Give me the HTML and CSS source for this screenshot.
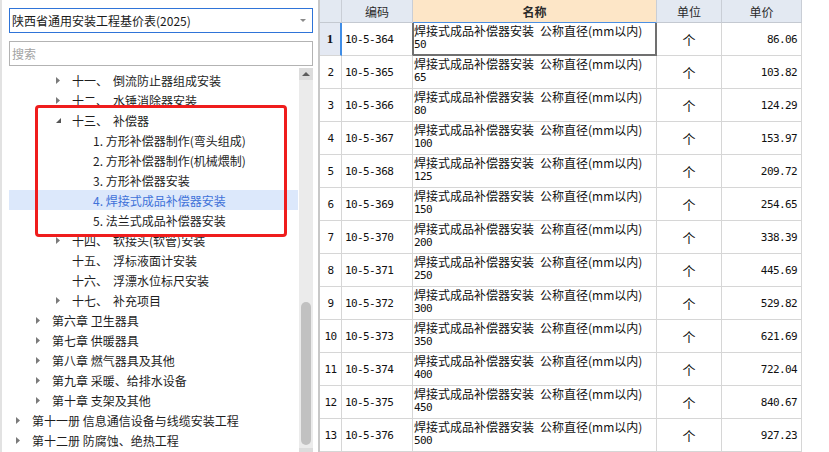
FILE: index.html
```html
<!DOCTYPE html>
<html lang="zh-CN">
<head>
<meta charset="utf-8">
<title>基价表</title>
<link rel="stylesheet" href="styles.css">
</head>
<body>
<div class="app">
  <aside class="side">
    <div class="combo">
      <span class="combo-text">陕西省通用安装工程基价表(2025)</span>
      <svg class="caret" width="6" height="3" viewBox="0 0 6 3"><polygon points="0,0 6,0 3,3" fill="#8a8a8a"/></svg>
    </div>
    <div class="search">搜索</div>
    <div class="tree-wrap">
      <ul class="tree">
        <li class="node l2"><span class="tw"><svg width="4" height="7" viewBox="0 0 4 7"><polygon points="0,0 4,3.5 0,7" fill="#7a7a7a"/></svg></span><span class="ord">十一、</span>倒流防止器组成安装</li>
        <li class="node l2"><span class="tw"><svg width="4" height="7" viewBox="0 0 4 7"><polygon points="0,0 4,3.5 0,7" fill="#7a7a7a"/></svg></span><span class="ord">十二、</span>水锤消除器安装</li>
        <li class="node l2"><span class="tw"><svg width="5" height="5" viewBox="0 0 5 5"><polygon points="5,0 5,5 0,5" fill="#555"/></svg></span><span class="ord">十三、</span>补偿器</li>
        <li class="node l3">1. 方形补偿器制作(弯头组成)</li>
        <li class="node l3">2. 方形补偿器制作(机械煨制)</li>
        <li class="node l3">3. 方形补偿器安装</li>
        <li class="node l3 sel">4. 焊接式成品补偿器安装</li>
        <li class="node l3">5. 法兰式成品补偿器安装</li>
        <li class="node l2"><span class="tw"><svg width="4" height="7" viewBox="0 0 4 7"><polygon points="0,0 4,3.5 0,7" fill="#7a7a7a"/></svg></span><span class="ord">十四、</span>软接头(软管)安装</li>
        <li class="node l2"><span class="tw"></span><span class="ord">十五、</span>浮标液面计安装</li>
        <li class="node l2"><span class="tw"></span><span class="ord">十六、</span>浮漂水位标尺安装</li>
        <li class="node l2"><span class="tw"><svg width="4" height="7" viewBox="0 0 4 7"><polygon points="0,0 4,3.5 0,7" fill="#7a7a7a"/></svg></span><span class="ord">十七、</span>补充项目</li>
        <li class="node l1"><span class="tw"><svg width="4" height="7" viewBox="0 0 4 7"><polygon points="0,0 4,3.5 0,7" fill="#7a7a7a"/></svg></span>第六章 卫生器具</li>
        <li class="node l1"><span class="tw"><svg width="4" height="7" viewBox="0 0 4 7"><polygon points="0,0 4,3.5 0,7" fill="#7a7a7a"/></svg></span>第七章 供暖器具</li>
        <li class="node l1"><span class="tw"><svg width="4" height="7" viewBox="0 0 4 7"><polygon points="0,0 4,3.5 0,7" fill="#7a7a7a"/></svg></span>第八章 燃气器具及其他</li>
        <li class="node l1"><span class="tw"><svg width="4" height="7" viewBox="0 0 4 7"><polygon points="0,0 4,3.5 0,7" fill="#7a7a7a"/></svg></span>第九章 采暖、给排水设备</li>
        <li class="node l1"><span class="tw"><svg width="4" height="7" viewBox="0 0 4 7"><polygon points="0,0 4,3.5 0,7" fill="#7a7a7a"/></svg></span>第十章 支架及其他</li>
        <li class="node l0"><span class="tw"><svg width="4" height="7" viewBox="0 0 4 7"><polygon points="0,0 4,3.5 0,7" fill="#7a7a7a"/></svg></span>第十一册 信息通信设备与线缆安装工程</li>
        <li class="node l0"><span class="tw"><svg width="4" height="7" viewBox="0 0 4 7"><polygon points="0,0 4,3.5 0,7" fill="#7a7a7a"/></svg></span>第十二册 防腐蚀、绝热工程</li>
      </ul>
      <div class="vscroll">
        <div class="sb-btn"><svg width="8" height="4" viewBox="0 0 8 4"><polygon points="0,4 8,4 4,0" fill="#5c5c5c"/></svg></div>
        <div class="sb-track"><div class="sb-thumb"></div></div>
        <div class="sb-btn"><svg width="8" height="4" viewBox="0 0 8 4"><polygon points="0,0 8,0 4,4" fill="#5c5c5c"/></svg></div>
      </div>
    </div>
    <div class="annot"></div>
  </aside>

  <main class="pane">
    <div class="grid">
      <div class="hd rn"></div>
      <div class="hd">编码</div>
      <div class="hd hd-name">名称</div>
      <div class="hd">单位</div>
      <div class="hd">单价</div>

      <div class="c rn cur">1</div><div class="c code cur-code">10-5-364</div><div class="c name focus"><span>焊接式成品补偿器安装&ensp;公称直径(mm以内)</span><span class="dn">50</span></div><div class="c unit">个</div><div class="c price">86.06</div>
      <div class="c rn">2</div><div class="c code">10-5-365</div><div class="c name"><span>焊接式成品补偿器安装&ensp;公称直径(mm以内)</span><span class="dn">65</span></div><div class="c unit">个</div><div class="c price">103.82</div>
      <div class="c rn">3</div><div class="c code">10-5-366</div><div class="c name"><span>焊接式成品补偿器安装&ensp;公称直径(mm以内)</span><span class="dn">80</span></div><div class="c unit">个</div><div class="c price">124.29</div>
      <div class="c rn">4</div><div class="c code">10-5-367</div><div class="c name"><span>焊接式成品补偿器安装&ensp;公称直径(mm以内)</span><span class="dn">100</span></div><div class="c unit">个</div><div class="c price">153.97</div>
      <div class="c rn">5</div><div class="c code">10-5-368</div><div class="c name"><span>焊接式成品补偿器安装&ensp;公称直径(mm以内)</span><span class="dn">125</span></div><div class="c unit">个</div><div class="c price">209.72</div>
      <div class="c rn">6</div><div class="c code">10-5-369</div><div class="c name"><span>焊接式成品补偿器安装&ensp;公称直径(mm以内)</span><span class="dn">150</span></div><div class="c unit">个</div><div class="c price">254.65</div>
      <div class="c rn">7</div><div class="c code">10-5-370</div><div class="c name"><span>焊接式成品补偿器安装&ensp;公称直径(mm以内)</span><span class="dn">200</span></div><div class="c unit">个</div><div class="c price">338.39</div>
      <div class="c rn">8</div><div class="c code">10-5-371</div><div class="c name"><span>焊接式成品补偿器安装&ensp;公称直径(mm以内)</span><span class="dn">250</span></div><div class="c unit">个</div><div class="c price">445.69</div>
      <div class="c rn">9</div><div class="c code">10-5-372</div><div class="c name"><span>焊接式成品补偿器安装&ensp;公称直径(mm以内)</span><span class="dn">300</span></div><div class="c unit">个</div><div class="c price">529.82</div>
      <div class="c rn">10</div><div class="c code">10-5-373</div><div class="c name"><span>焊接式成品补偿器安装&ensp;公称直径(mm以内)</span><span class="dn">350</span></div><div class="c unit">个</div><div class="c price">621.69</div>
      <div class="c rn">11</div><div class="c code">10-5-374</div><div class="c name"><span>焊接式成品补偿器安装&ensp;公称直径(mm以内)</span><span class="dn">400</span></div><div class="c unit">个</div><div class="c price">722.04</div>
      <div class="c rn">12</div><div class="c code">10-5-375</div><div class="c name"><span>焊接式成品补偿器安装&ensp;公称直径(mm以内)</span><span class="dn">450</span></div><div class="c unit">个</div><div class="c price">840.67</div>
      <div class="c rn">13</div><div class="c code">10-5-376</div><div class="c name"><span>焊接式成品补偿器安装&ensp;公称直径(mm以内)</span><span class="dn">500</span></div><div class="c unit">个</div><div class="c price">927.23</div>
    </div>
  </main>
</div>
</body>
</html>
```
FILE: styles.css
```css
html, body {
  margin: 0;
  padding: 0;
  background: #fff;
  overflow: hidden;
}

body {
  font-family: "Noto Sans CJK SC", "Noto Sans", sans-serif;
  font-size: 12px;
  color: #1e1e1e;
}

.app {
  display: flex;
  width: 829px;
  height: 452px;
  overflow: hidden;
}

/* ---------- left side ---------- */
.side {
  position: relative;
  flex: none;
  width: 318px;
  box-sizing: border-box;
  border-left: 2px solid #e2e2e2;
  padding: 8px 5px 0 7px;
  display: flex;
  flex-direction: column;
  overflow: hidden;
}

.combo {
  flex: none;
  height: 25px;
  box-sizing: border-box;
  border: 1px solid #2f74d8;
  display: flex;
  align-items: center;
  justify-content: space-between;
  padding: 0 6px 0 2px;
  font-size: 12px;
  color: #1a1a1a;
}

.search {
  flex: none;
  margin-top: 8px;
  height: 25px;
  box-sizing: border-box;
  border: 1px solid #b3b3b3;
  display: flex;
  align-items: center;
  padding-left: 2px;
  color: #a3a3a3;
}

.tree-wrap {
  margin-top: 2px;
  height: 392px;
  flex: none;
  display: flex;
}

.tree {
  list-style: none;
  margin: 0;
  padding: 2px 0 0;
  width: 289px;
  flex: none;
}

.node {
  height: 20px;
  display: flex;
  align-items: center;
  white-space: nowrap;
  color: #1e1e1e;
}

.node.l0 { padding-left: 7px; }
.node.l1 { padding-left: 27px; }
.node.l2 { padding-left: 47px; }
.node.l3 { padding-left: 84px; }

.node.sel {
  background: #dce8fb;
  color: #3f72d9;
}

.tw {
  width: 16px;
  flex: none;
  display: flex;
  align-items: center;
}

.ord {
  margin-right: 5px;
}

.vscroll {
  width: 14px;
  margin-left: 1px;
  flex: none;
  display: flex;
  flex-direction: column;
  background: #ebebeb;
}

.sb-btn {
  height: 12px;
  flex: none;
  display: flex;
  align-items: center;
  justify-content: center;
  background: #dcdcdc;
}

.sb-track {
  flex: 1;
  padding: 222px 2px 0;
}

.sb-thumb {
  height: 143px;
  border-radius: 5px;
  background: #c1c1c1;
}

.annot {
  position: absolute;
  left: 33px;
  top: 105px;
  width: 252px;
  height: 132px;
  box-sizing: border-box;
  border: 3px solid #ef1d1d;
  border-radius: 4px;
}

/* ---------- right grid ---------- */
.pane {
  flex: 1;
  border-left: 2px solid #c8c8c8;
}

.grid {
  display: grid;
  grid-template-columns: 22px 71px 244px 65px 80px;
  grid-template-rows: 23px;
  grid-auto-rows: 33px;
}

.hd {
  box-sizing: border-box;
  background: #e3e9f2;
  border-right: 1px solid #c9ced6;
  border-bottom: 1px solid #c4c9d1;
  display: flex;
  align-items: center;
  justify-content: center;
  color: #2a2a2a;
  font-size: 12px;
}

.hd-name {
  background: #fde6c7;
  font-weight: bold;
  border-bottom-color: #4a8fe3;
}

.c {
  box-sizing: border-box;
  border-right: 1px solid #d6d6d6;
  border-bottom: 1px solid #d6d6d6;
  color: #111;
  display: flex;
  align-items: center;
}

.rn {
  justify-content: center;
  font-family: "DejaVu Sans Mono", "Liberation Mono", monospace;
  font-size: 11px;
  letter-spacing: -0.6px;
}

.rn.cur {
  background: #e4e9f3;
  border-right: 2px solid #3f8de6;
  font-family: "Liberation Serif", serif;
  font-weight: bold;
  font-size: 13px;
  letter-spacing: 0;
}

.code {
  padding-left: 3px;
  font-family: "DejaVu Sans Mono", "Liberation Mono", monospace;
  font-size: 11px;
  letter-spacing: -0.6px;
}

.cur-code {
  border-right-color: #707070;
}

.name {
  display: flex;
  flex-direction: column;
  align-items: flex-start;
  justify-content: flex-start;
  padding: 1px 0 0 1px;
  line-height: 14px;
  white-space: nowrap;
  font-size: 12px;
}

.dn {
  font-family: "DejaVu Sans Mono", "Liberation Mono", monospace;
  font-size: 11px;
  letter-spacing: -0.6px;
}

.focus {
  border-right-color: #707070;
  border-bottom-color: #707070;
  box-shadow: inset 1px 0 #707070, inset -1px 0 #707070, inset 0 -1px #707070;
}

.unit {
  justify-content: center;
  font-size: 13px;
}

.price {
  justify-content: flex-end;
  padding-right: 4px;
  font-family: "DejaVu Sans Mono", "Liberation Mono", monospace;
  font-size: 11px;
  letter-spacing: -0.6px;
}
```
